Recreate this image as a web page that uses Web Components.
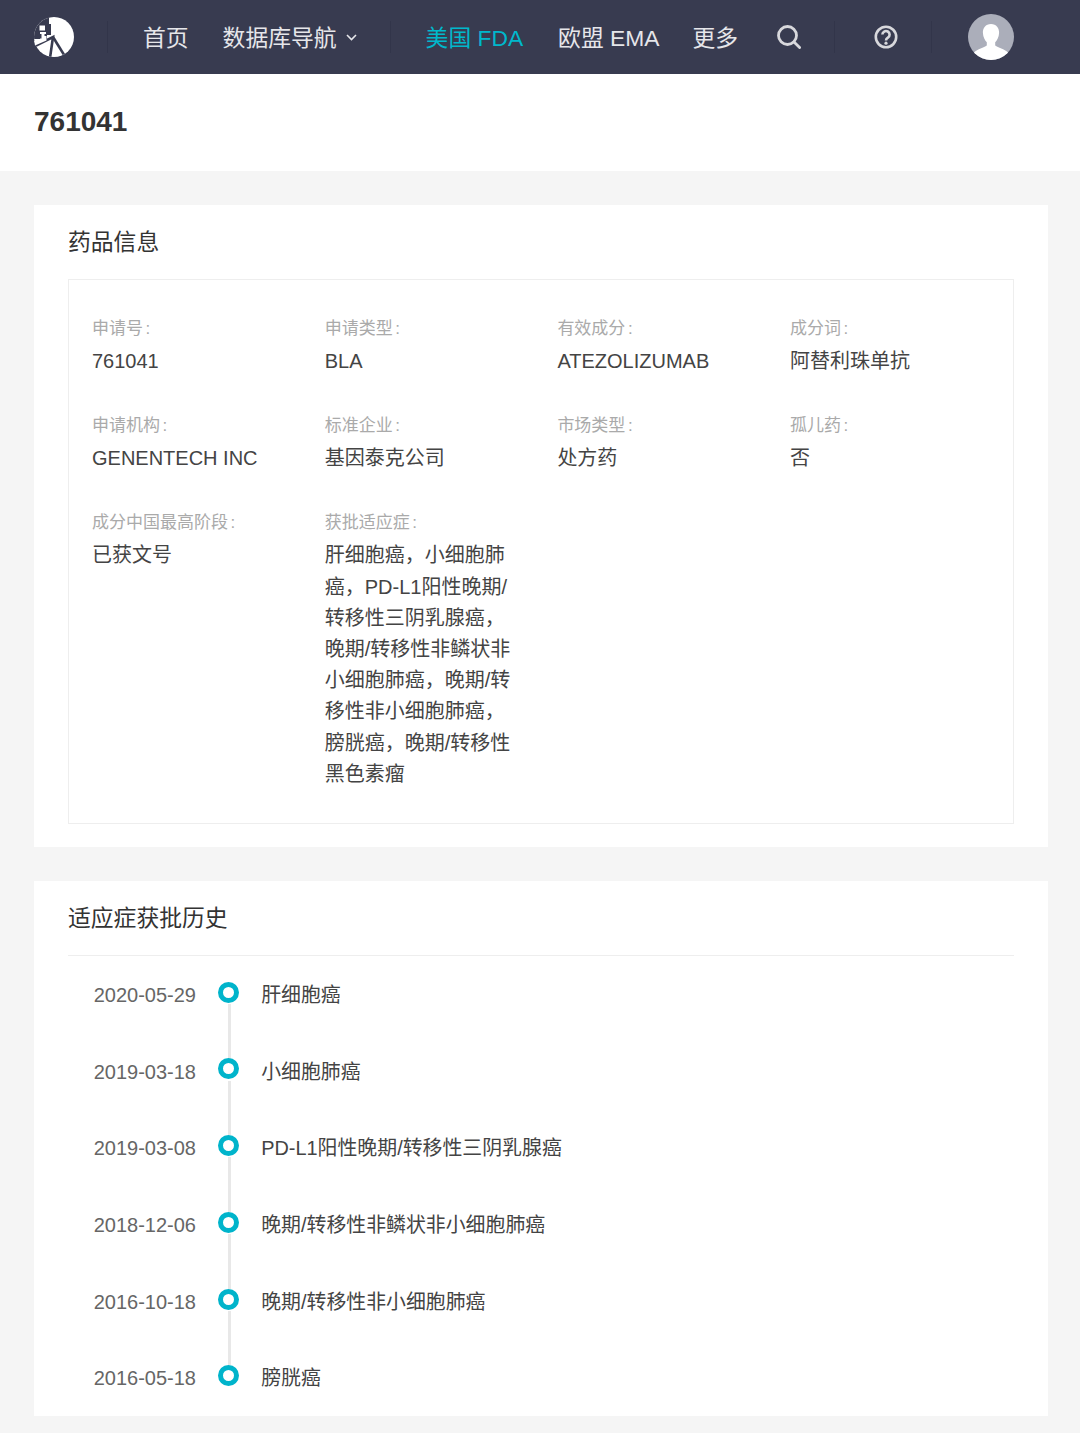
<!DOCTYPE html>
<html lang="zh">
<head>
<meta charset="utf-8">
<title>761041</title>
<style>
    html, body { margin: 0; background: #f5f5f5; }
    body { font-family: "Liberation Sans", "Noto Sans CJK SC", sans-serif; color: #444; }
    main { display: flex; flex-direction: column; gap: 34px; padding: 34px 32px 17px 34px; }
</style>
</head>
<body>
<app-header></app-header>
<page-title>761041</page-title>
<main>
    <info-card heading="药品信息" boxed>
        <info-grid>
            <info-field label="申请号">761041</info-field>
            <info-field label="申请类型">BLA</info-field>
            <info-field label="有效成分">ATEZOLIZUMAB</info-field>
            <info-field label="成分词">阿替利珠单抗</info-field>
            <info-field label="申请机构">GENENTECH INC</info-field>
            <info-field label="标准企业">基因泰克公司</info-field>
            <info-field label="市场类型">处方药</info-field>
            <info-field label="孤儿药">否</info-field>
            <info-field label="成分中国最高阶段">已获文号</info-field>
            <info-field label="获批适应症">肝细胞癌，小细胞肺癌，PD-L1阳性晚期/转移性三阴乳腺癌，晚期/转移性非鳞状非小细胞肺癌，晚期/转移性非小细胞肺癌，膀胱癌，晚期/转移性黑色素瘤</info-field>
        </info-grid>
    </info-card>
    <info-card heading="适应症获批历史">
        <time-line>
            <time-item date="2020-05-29">肝细胞癌</time-item>
            <time-item date="2019-03-18">小细胞肺癌</time-item>
            <time-item date="2019-03-08">PD-L1阳性晚期/转移性三阴乳腺癌</time-item>
            <time-item date="2018-12-06">晚期/转移性非鳞状非小细胞肺癌</time-item>
            <time-item date="2016-10-18">晚期/转移性非小细胞肺癌</time-item>
            <time-item date="2016-05-18">膀胱癌</time-item>
        </time-line>
    </info-card>
</main>

<script>
class AppHeader extends HTMLElement {
    constructor() {
        super();
        const shadow = this.attachShadow({ mode: 'open' });
        shadow.innerHTML = `
            <style>
                :host {
                    display: flex;
                    align-items: center;
                    height: 74px;
                    padding-left: 34px;
                    background: #383b50;
                    color: #e6e6ea;
                    font-size: 22.8px;
                }
                .logo { width: 40px; height: 42px; display: block; margin-right: 33px; }
                .sep { width: 1px; height: 32px; background: #32354a; flex: none; }
                .item { margin-right: 34px; padding-bottom: 2px; white-space: nowrap; display: flex; align-items: center; }
                .item svg { margin-left: 9px; margin-top: 2px; }
                .active { color: #00b8cc; }
                .icon { display: block; flex: none; }
                .avatar { width: 46px; height: 46px; display: block; flex: none; }
            </style>
            <svg class="logo" viewBox="0 0 40 42">
                <defs>
                    <clipPath id="disc"><circle cx="20" cy="21" r="20"/></clipPath>
                </defs>
                <g clip-path="url(#disc)">
                    <rect width="40" height="42" fill="#fff"/>
                    <path d="M0 0H15V8H17V19H13V23H0Z" fill="#383b50"/>
                    <path d="M0 30.5L19 21L16 42" stroke="#383b50" stroke-width="2.6" fill="none"/>
                    <path d="M19 21L32 42" stroke="#383b50" stroke-width="2.6" fill="none"/>
                </g>
                <rect x="5.5" y="9.5" width="5.5" height="5" fill="#fff"/>
                <path d="M6 16H12V18H10.5V20H12.5V24.5L1 29.5L0.2 25H6V22.5H7.5V18H6Z" fill="#fff"/>
            </svg>
            <span class="sep" style="margin-right:35px"></span>
            <span class="item">首页</span>
            <span class="item">数据库导航<svg width="11" height="7" viewBox="0 0 11 7"><path d="M1 1L5.5 5.5L10 1" fill="none" stroke="#e6e6ea" stroke-width="1.6"/></svg></span>
            <span class="sep" style="margin-right:35px;margin-left:-1px"></span>
            <span class="item active" style="margin-right:35px">美国 FDA</span>
            <span class="item" style="margin-right:33px">欧盟 EMA</span>
            <span class="item" style="margin-right:39px">更多</span>
            <svg class="icon" width="24" height="24" viewBox="0 0 24 24" style="margin-right:33px">
                <circle cx="10.5" cy="10.5" r="9" fill="none" stroke="#d8d8dc" stroke-width="2.8"/>
                <path d="M17 17L22.6 22.6" stroke="#d8d8dc" stroke-width="2.8" stroke-linecap="round"/>
            </svg>
            <span class="sep" style="margin-right:39px"></span>
            <svg class="icon" width="24" height="24" viewBox="0 0 24 24" style="margin-right:33px">
                <circle cx="12" cy="12" r="10.2" fill="none" stroke="#d8d8dc" stroke-width="2.6"/>
                <path d="M8.4 9.6A3.6 3.6 0 1 1 13.9 12.7C12.6 13.5 12 14 12 15.4" fill="none" stroke="#d8d8dc" stroke-width="2.6"/>
                <circle cx="12" cy="18.2" r="1.6" fill="#d8d8dc"/>
            </svg>
            <span class="sep" style="margin-right:36px"></span>
            <svg class="avatar" viewBox="0 0 46 46">
                <defs>
                    <clipPath id="face"><circle cx="23" cy="23" r="23"/></clipPath>
                </defs>
                <g clip-path="url(#face)">
                    <rect width="46" height="46" fill="#abaeba"/>
                    <path d="M23 10C17.6 10 14.7 14 14.9 19C15.1 23.4 17 26.5 18.8 28.2V31.4C16 33.6 9.5 34.6 6 38.5V46H40V38.5C36.5 34.6 30 33.6 27.2 31.4V28.2C29 26.5 30.9 23.4 31.1 19C31.3 14 28.4 10 23 10Z" fill="#fff"/>
                </g>
            </svg>
        `;
    }
}

class PageTitle extends HTMLElement {
    constructor() {
        super();
        const shadow = this.attachShadow({ mode: 'open' });
        shadow.innerHTML = `
            <style>
                :host {
                    display: block;
                    height: 97px;
                    line-height: 96px;
                    padding-left: 34px;
                    background: #fff;
                    color: #333;
                    font-size: 28px;
                    font-weight: bold;
                }
            </style>
            <slot></slot>
        `;
    }
}

class InfoCard extends HTMLElement {
    constructor() {
        super();
        const shadow = this.attachShadow({ mode: 'open' });
        shadow.innerHTML = `
            <style>
                :host {
                    display: block;
                    background: #fff;
                    padding: 0 34.5px 23px 34px;
                }
                .head {
                    height: 73.5px;
                    line-height: 75.5px;
                    font-size: 22.8px;
                    color: #333;
                }
                .body { border-top: 1.5px solid #eee; }
                :host([boxed]) .body { border: 1.5px solid #eee; }
                :host(:not([boxed])) { padding-bottom: 0; }
                :host(:not([boxed])) .head { height: 74.5px; }
            </style>
            <div class="head"></div>
            <div class="body"><slot></slot></div>
        `;
    }

    static get observedAttributes() {
        return ['heading'];
    }

    attributeChangedCallback(name, oldValue, newValue) {
        if (name === 'heading') this.shadowRoot.querySelector('.head').textContent = newValue;
    }
}

class InfoGrid extends HTMLElement {
    constructor() {
        super();
        const shadow = this.attachShadow({ mode: 'open' });
        shadow.innerHTML = `
            <style>
                :host {
                    display: grid;
                    grid-template-columns: repeat(4, 232.7px);
                    row-gap: 36px;
                    padding: 36.5px 0 32.5px 23px;
                }
            </style>
            <slot></slot>
        `;
    }
}

class InfoField extends HTMLElement {
    constructor() {
        super();
        const shadow = this.attachShadow({ mode: 'open' });
        shadow.innerHTML = `
            <style>
                :host { display: block; }
                .label {
                    height: 24px;
                    line-height: 25px;
                    margin-bottom: 6px;
                    font-size: 17px;
                    color: #aaa;
                }
                .colon { margin-left: 2.5px; }
                .value {
                    width: 188px;
                    line-height: 31.2px;
                    font-size: 20px;
                    color: #444;
                    word-break: break-all;
                }
            </style>
            <div class="label"><span class="name"></span><span class="colon">:</span></div>
            <div class="value"><slot></slot></div>
        `;
    }

    static get observedAttributes() {
        return ['label'];
    }

    attributeChangedCallback(name, oldValue, newValue) {
        if (name === 'label') this.shadowRoot.querySelector('.name').textContent = newValue;
    }
}

class TimeLine extends HTMLElement {
    constructor() {
        super();
        const shadow = this.attachShadow({ mode: 'open' });
        shadow.innerHTML = `
            <style>
                :host { display: block; }
            </style>
            <slot></slot>
        `;
    }
}

class TimeItem extends HTMLElement {
    constructor() {
        super();
        const shadow = this.attachShadow({ mode: 'open' });
        shadow.innerHTML = `
            <style>
                :host {
                    display: grid;
                    grid-template-columns: 128px 65.2px 1fr;
                    grid-template-rows: 76.7px;
                    font-size: 20px;
                    line-height: 79.5px;
                }
                :host(:last-child) .line { display: none; }
                .date { text-align: right; color: #666; }
                .track { position: relative; }
                .dot {
                    position: absolute;
                    left: 22px;
                    top: 25.75px;
                    width: 11px;
                    height: 11px;
                    border: 5.75px solid #00b4cb;
                    border-radius: 50%;
                    background: #fff;
                }
                .line {
                    position: absolute;
                    left: 32px;
                    top: 48px;
                    bottom: -26px;
                    width: 3px;
                    background: #e8e8e8;
                }
                .text { color: #444; white-space: nowrap; font-size: 19.9px; }
            </style>
            <div class="date"></div>
            <div class="track"><span class="line"></span><span class="dot"></span></div>
            <div class="text"><slot></slot></div>
        `;
    }

    static get observedAttributes() {
        return ['date'];
    }

    attributeChangedCallback(name, oldValue, newValue) {
        if (name === 'date') this.shadowRoot.querySelector('.date').textContent = newValue;
    }
}

customElements.define('app-header', AppHeader);
customElements.define('page-title', PageTitle);
customElements.define('info-card', InfoCard);
customElements.define('info-grid', InfoGrid);
customElements.define('info-field', InfoField);
customElements.define('time-line', TimeLine);
customElements.define('time-item', TimeItem);
</script>
</body>
</html>
